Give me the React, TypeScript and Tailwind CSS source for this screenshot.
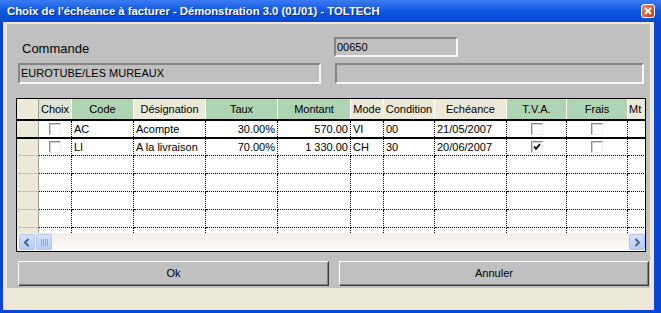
import React from 'react';

type Col = {
  label: string;
  w: string;
  head: string;
  align: 'left' | 'right' | 'center';
};

const COLS: Col[] = [
  { label: 'Choix', w: 'w-[33px]', head: 'bg-[#dde4d3]', align: 'center' },
  { label: 'Code', w: 'w-[62px]', head: 'bg-[#aed4b3]', align: 'left' },
  { label: 'Désignation', w: 'w-[72px]', head: 'bg-[#ece9d8]', align: 'left' },
  { label: 'Taux', w: 'w-[72px]', head: 'bg-[#aed4b3]', align: 'right' },
  { label: 'Montant', w: 'w-[73px]', head: 'bg-[#aed4b3]', align: 'right' },
  { label: 'Mode', w: 'w-[33px]', head: 'bg-[#ece9d8]', align: 'left' },
  { label: 'Condition', w: 'w-[51px]', head: 'bg-[#ece9d8]', align: 'left' },
  { label: 'Echéance', w: 'w-[72px]', head: 'bg-[#ece9d8]', align: 'left' },
  { label: 'T.V.A.', w: 'w-[60px]', head: 'bg-[#aed4b3]', align: 'center' },
  { label: 'Frais', w: 'w-[61px]', head: 'bg-[#aed4b3]', align: 'center' },
  { label: 'Mt', w: 'w-[40px]', head: 'bg-[#ece9d8]', align: 'left' },
];

type Row = (string | boolean)[];

const ROWS: Row[] = [
  [false, 'AC', 'Acompte', '30.00%', '570.00', 'VI', '00', '21/05/2007', false, false, ''],
  [false, 'LI', 'A la livraison', '70.00%', '1 330.00', 'CH', '30', '20/06/2007', true, false, ''],
];

function Check({ checked }: { checked: boolean }) {
  return (
    <div className="w-[12px] h-[12px] border border-t-[#8c8c8c] border-l-[#8c8c8c] border-r-[#eeeeee] border-b-[#eeeeee] bg-white shadow-[inset_1px_1px_0_#d2d2d2] flex items-center justify-center">
      {checked && (
        <svg width="8" height="8" viewBox="0 0 8 8">
          <path d="M1 3.5 L3 5.8 L7 1.2" stroke="#000" strokeWidth="1.8" fill="none" />
        </svg>
      )}
    </div>
  );
}

function Field({ className, children }: { className: string; children?: React.ReactNode }) {
  return (
    <div
      className={`${className} border-2 border-t-[#868686] border-l-[#868686] border-r-[#f6f6f6] border-b-[#f6f6f6] flex items-center pl-[1px] text-[11px] leading-none text-black`}
    >
      {children}
    </div>
  );
}

function Btn({ className, children }: { className: string; children: React.ReactNode }) {
  return (
    <div
      className={`${className} h-[25px] border border-t-white border-l-white border-r-[#3a3a3a] border-b-[#3a3a3a] shadow-[inset_-1px_-1px_0_#808080] flex items-center justify-center text-[11px] text-black`}
    >
      {children}
    </div>
  );
}

function RowHead({ h, line = true }: { h: string; line?: boolean }) {
  return (
    <div
      className={`w-[22px] ${h} shrink-0 bg-[#ece9d8] border-r border-r-[#9f9c8e] ${
        line ? 'border-b border-b-[#c6c2b1]' : ''
      }`}
    />
  );
}

function BodyRow({ row, h, dotted }: { row?: Row; h: string; dotted: boolean }) {
  return (
    <div className={`flex ${h} shrink-0`}>
      <RowHead h={h} line={dotted} />
      {COLS.map((c, i) => {
        const v = row ? row[i] : '';
        const just =
          c.align === 'right' ? 'justify-end pr-[2px]' : c.align === 'center' ? 'justify-center' : 'justify-start pl-[2px]';
        return (
          <div
            key={c.label}
            className={`${c.w} shrink-0 bg-white flex items-center ${just} text-[11px] text-black whitespace-nowrap overflow-hidden border-r border-dotted border-r-black ${
              dotted ? 'border-b border-b-black' : ''
            }`}
          >
            {typeof v === 'boolean' ? <Check checked={v} /> : v}
          </div>
        );
      })}
    </div>
  );
}

function Arrow({ dir }: { dir: 'left' | 'right' }) {
  return (
    <div className="w-[16px] h-[16px] shrink-0 rounded-[2px] border border-[#b2c5f1] bg-gradient-to-b from-[#d5e1fd] to-[#b6cbf9] flex items-center justify-center">
      <svg width="8" height="9" viewBox="0 0 8 9">
        <path
          d={dir === 'left' ? 'M5.5 1 L2 4.5 L5.5 8' : 'M2.5 1 L6 4.5 L2.5 8'}
          stroke="#4d6185"
          strokeWidth="2"
          fill="none"
        />
      </svg>
    </div>
  );
}

export default function App() {
  return (
    <div className="w-[661px] h-[313px] bg-[#0a46d6] flex flex-col font-['Liberation_Sans',Arial,sans-serif] overflow-hidden">
      <div className="h-[22px] shrink-0 flex items-center pl-[7px] bg-gradient-to-b from-[#3b7cf2] via-[#0a57e2] to-[#0749d2]">
        <span className="text-[11.3px] font-bold text-white whitespace-nowrap [text-shadow:1px_1px_0_#0a2b8c]">
          Choix de l'échéance à facturer - Démonstration 3.0 (01/01) - TOLTECH
        </span>
        <div className="ml-auto mr-[6px] w-[14px] h-[14px] rounded-[3px] border border-white bg-gradient-to-br from-[#ec8a66] to-[#c4390c] flex items-center justify-center">
          <svg width="8" height="8" viewBox="0 0 8 8">
            <path d="M1 1 L7 7 M7 1 L1 7" stroke="#fff" strokeWidth="1.8" />
          </svg>
        </div>
      </div>

      <div className="flex-1 ml-[3px] mr-[7px] mb-[3px] bg-[#ece9d8] flex flex-col">
        <div className="mx-[4px] mt-[2px] h-[264px] bg-[#c0c0c0] flex flex-col">
          <div className="mt-[13px] h-[20px] flex items-center">
            <span className="ml-[15px] w-[312px] text-[13px] leading-none text-black pt-[2px]">Commande</span>
            <Field className="w-[124px] h-[20px]">00650</Field>
          </div>
          <div className="mt-[6px] h-[21px] flex">
            <Field className="ml-[11px] w-[303px] h-[21px]">EUROTUBE/LES MUREAUX</Field>
            <Field className="ml-[14px] w-[309px] h-[21px]" />
          </div>

          <div className="mt-[14px] ml-[9px] w-[630px] h-[154px] border border-black overflow-hidden flex flex-col bg-white">
            <div className="flex h-[20px] shrink-0">
              <RowHead h="h-[20px]" line={false} />
              {COLS.map((c) => (
                <div
                  key={c.label}
                  className={`${c.w} shrink-0 ${c.head} border-r border-r-white flex items-center ${
                    c.label === 'Mt' ? 'justify-start pl-[1px]' : 'justify-center'
                  } text-[11px] text-black whitespace-nowrap overflow-hidden`}
                >
                  {c.label}
                </div>
              ))}
            </div>
            <div className="h-[2px] shrink-0 bg-black" />
            <BodyRow row={ROWS[0]} h="h-[16px]" dotted={false} />
            <div className="h-[2px] shrink-0 bg-black" />
            <BodyRow row={ROWS[1]} h="h-[17px]" dotted />
            <BodyRow h="h-[18px]" dotted />
            <BodyRow h="h-[18px]" dotted />
            <BodyRow h="h-[18px]" dotted />
            <BodyRow h="h-[18px]" dotted />
            <BodyRow h="h-[5px]" dotted={false} />
            <div className="h-[18px] shrink-0 flex items-center pl-[2px] bg-gradient-to-b from-[#f1efe7] to-[#fcfcfa]">
              <Arrow dir="left" />
              <div className="ml-[1px] w-[16px] h-[16px] shrink-0 rounded-[2px] border border-[#b2c5f1] bg-gradient-to-b from-[#d5e1fd] to-[#b9cdfa] flex items-center justify-center gap-[1px]">
                <div className="w-[1px] h-[7px] bg-[#8aa4e0]" />
                <div className="w-[1px] h-[7px] bg-[#8aa4e0]" />
                <div className="w-[1px] h-[7px] bg-[#8aa4e0]" />
                <div className="w-[1px] h-[7px] bg-[#8aa4e0]" />
              </div>
              <div className="flex-1" />
              <Arrow dir="right" />
            </div>
          </div>

          <div className="mt-[9px] flex">
            <Btn className="ml-[11px] w-[311px]">Ok</Btn>
            <Btn className="ml-[10px] w-[310px]">Annuler</Btn>
          </div>
        </div>
      </div>
    </div>
  );
}
